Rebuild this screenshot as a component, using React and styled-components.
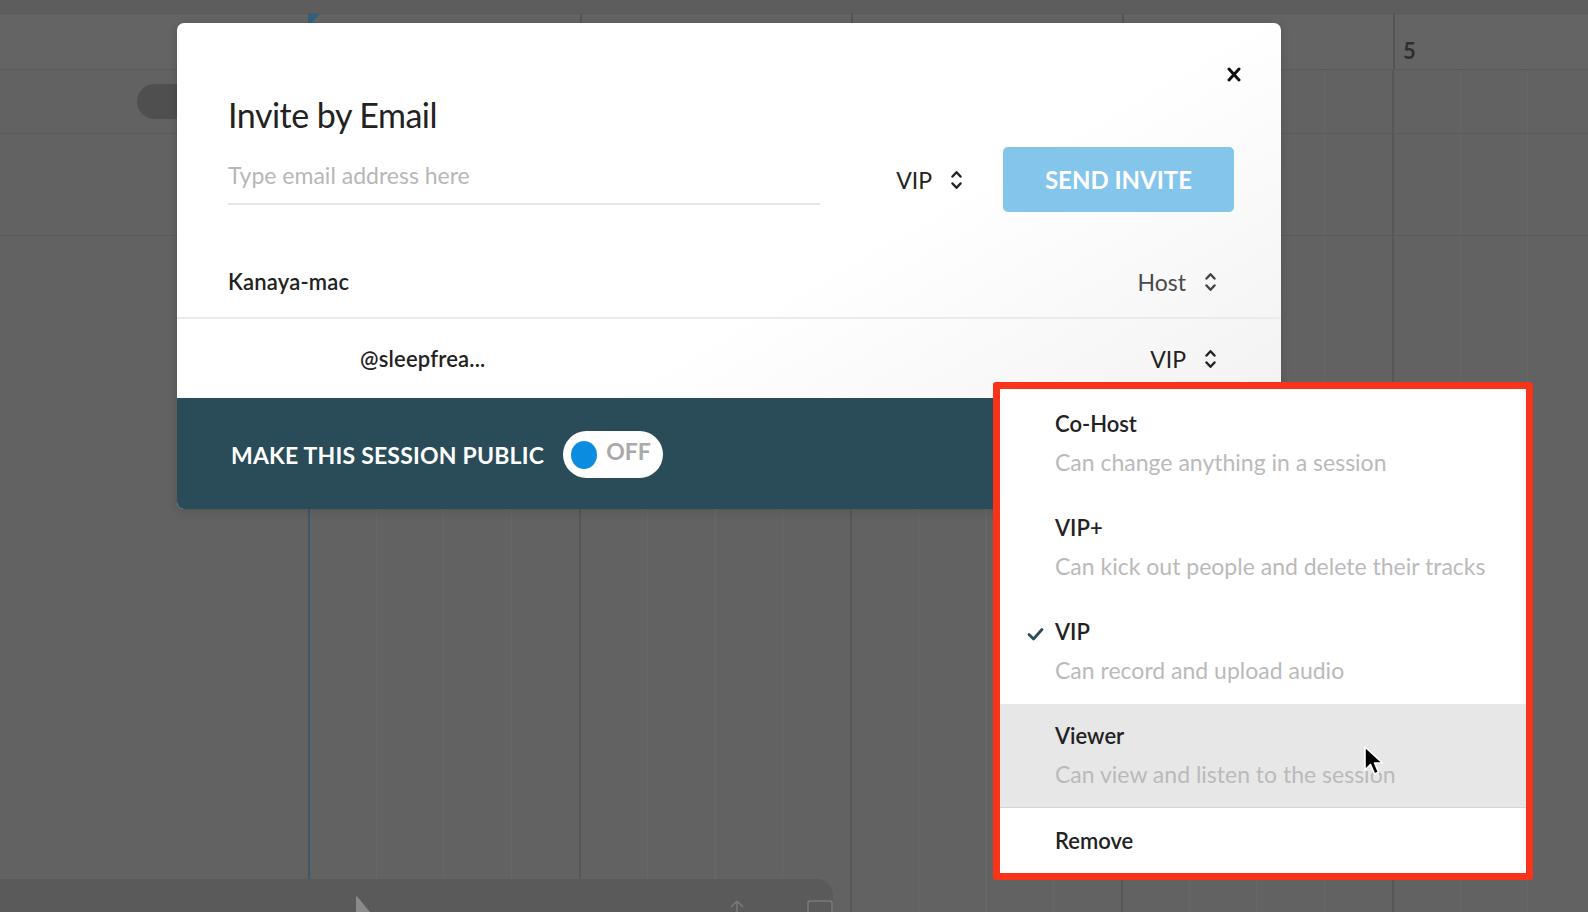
import React from "react";
import styled, { createGlobalStyle } from "styled-components";

const roles = [
  { name: "Co-Host", desc: "Can change anything in a session" },
  { name: "VIP+", desc: "Can kick out people and delete their tracks" },
  { name: "VIP", desc: "Can record and upload audio", checked: true },
  { name: "Viewer", desc: "Can view and listen to the session", hover: true },
];

const members = [
  { name: "Kanaya-mac", role: "Host", indent: false, muted: true },
  { name: "@sleepfrea...", role: "VIP", indent: true },
];

const bars = [1, 2, 3, 4, 5];

function Chevrons({ color = "#222" }) {
  return (
    <svg width="11" height="22" viewBox="0 0 11 22" fill="none">
      <path d="M1.5 7.5 L5.5 3.2 L9.5 7.5" stroke={color} strokeWidth="2.4" strokeLinecap="round" strokeLinejoin="round" />
      <path d="M1.5 14.5 L5.5 18.8 L9.5 14.5" stroke={color} strokeWidth="2.4" strokeLinecap="round" strokeLinejoin="round" />
    </svg>
  );
}

function App() {
  return (
    <Page>
      <GlobalStyle />
      <TopStrip />
      <Ruler>
        <RulerGutter>
          <Playhead />
        </RulerGutter>
        {bars.map((n) => (
          <BarCell key={n}>{n}</BarCell>
        ))}
        <BarCell />
      </Ruler>
      <Tracks>
        <TrackRow $h={64}>
          <TrackPill />
        </TrackRow>
        <TrackRow $h={102} />
        <Transport>
          <PlayIcon />
          <TransportIcon $left={350}>
            <svg width="16" height="12" viewBox="0 0 16 12" fill="none">
              <path d="M8 1 L14 7 M8 1 L2 7 M8 1 V12" stroke="#7a7a7a" strokeWidth="1.5" />
            </svg>
          </TransportIcon>
          <TransportIcon $left={62}>
            <svg width="26" height="12" viewBox="0 0 26 12" fill="none">
              <rect x="1" y="1" width="24" height="14" rx="2" stroke="#7a7a7a" strokeWidth="1.5" />
            </svg>
          </TransportIcon>
        </Transport>
      </Tracks>

      <Dialog>
        <CloseButton>
          <svg width="14" height="15" viewBox="0 0 14 15">
            <path d="M2 2 L12 13 M12 2 L2 13" stroke="#111" strokeWidth="3" strokeLinecap="round" />
          </svg>
        </CloseButton>
        <DialogTop>
          <Title>Invite by Email</Title>
          <InviteRow>
            <EmailInput placeholder="Type email address here" />
            <RolePicker>
              VIP <Chevrons />
            </RolePicker>
            <SendButton>SEND INVITE</SendButton>
          </InviteRow>
        </DialogTop>
        <MemberList>
          {members.map((m, i) => (
            <MemberRow key={m.name} $indent={m.indent} $first={i === 0}>
              <MemberName>{m.name}</MemberName>
              <RolePicker $muted={m.muted}>
                {m.role} <Chevrons color={m.muted ? "#444" : "#222"} />
              </RolePicker>
            </MemberRow>
          ))}
        </MemberList>
        <Footer>
          <FooterLabel>MAKE THIS SESSION PUBLIC</FooterLabel>
          <Toggle>
            <Knob />
            <ToggleText>OFF</ToggleText>
          </Toggle>
        </Footer>
      </Dialog>

      <Highlight>
        <Menu>
          {roles.map((r) => (
            <MenuItem key={r.name} $hover={r.hover}>
              <CheckSlot>
                {r.checked && (
                  <svg width="17" height="14" viewBox="0 0 17 14" fill="none">
                    <path d="M2 7.5 L6.5 12 L15 2.5" stroke="#2b4d58" strokeWidth="2.8" strokeLinecap="round" strokeLinejoin="round" />
                  </svg>
                )}
              </CheckSlot>
              <ItemText>
                <ItemName>{r.name}</ItemName>
                <ItemDesc>{r.desc}</ItemDesc>
              </ItemText>
            </MenuItem>
          ))}
          <RemoveItem>
            <CheckSlot />
            <ItemName>Remove</ItemName>
          </RemoveItem>
        </Menu>
      </Highlight>

      <Cursor>
        <svg width="22" height="32" viewBox="0 0 22 32">
          <path
            d="M2 2 L2 25 L7.5 19.5 L11.5 29 L15.5 27.3 L11.6 18 L19.5 18 Z"
            fill="#000"
            stroke="#fff"
            strokeWidth="1.6"
            strokeLinejoin="round"
          />
        </svg>
      </Cursor>
    </Page>
  );
}

export default App;

const GlobalStyle = createGlobalStyle`
  * { box-sizing: border-box; }
  body {
    margin: 0;
    background: #626262;
    font-family: Lato, "Noto Sans", sans-serif;
  }
  input::placeholder { color: #b7b7b7; }
`;

const Page = styled.div`
  position: relative;
  width: 1588px;
  height: 912px;
  overflow: hidden;
  background: #626262;
  display: grid;
  grid-template-rows: 14px 56px 1fr;
`;
const TopStrip = styled.div`
  background: #5d5d5d;
  border-bottom: 1px solid #585858;
`;
const Ruler = styled.div`
  display: flex;
  background: #646464;
  border-bottom: 1px solid #5a5a5a;
`;
const RulerGutter = styled.div`
  width: 309px;
  flex-shrink: 0;
  display: flex;
  justify-content: flex-end;
`;
const Playhead = styled.div`
  width: 12px;
  height: 12px;
  margin-right: -11px;
  background: #2f607e;
  clip-path: polygon(0 0, 100% 0, 0 100%);
`;
const BarCell = styled.div`
  width: 271px;
  flex-shrink: 0;
  border-left: 2px solid #555;
  padding: 26px 0 0 8px;
  font-size: 22px;
  font-weight: 700;
  color: #2e2e2e;
  line-height: 1;
`;
const Tracks = styled.div`
  display: flex;
  flex-direction: column;
  background-color: #626262;
  background-image: linear-gradient(to right, #3e5868 0 2px, transparent 2px),
    repeating-linear-gradient(to right, #575757 0 2px, transparent 2px 271px),
    repeating-linear-gradient(to right, #676767 0 1px, transparent 1px 67.75px);
  background-position: 308px 0;
  background-size: calc(100% - 308px) 100%;
  background-repeat: no-repeat;
`;
const TrackRow = styled.div`
  height: ${(p) => p.$h}px;
  flex-shrink: 0;
  border-bottom: 1px solid #5a5a5a;
  display: flex;
  align-items: center;
`;
const TrackPill = styled.div`
  margin-left: 137px;
  width: 90px;
  height: 35px;
  border-radius: 18px;
  background: #4f4f4f;
`;
const Transport = styled.div`
  margin-top: auto;
  width: 833px;
  height: 33px;
  background: #5a5a5a;
  border-top-right-radius: 16px;
  display: flex;
  align-items: flex-end;
  overflow: hidden;
`;
const PlayIcon = styled.div`
  margin-left: 356px;
  width: 32px;
  height: 17px;
  background: #8a8a8a;
  clip-path: polygon(0 0, 60% 100%, 0 100%);
  border-radius: 3px 0 0 0;
`;
const TransportIcon = styled.div`
  margin-left: ${(p) => p.$left}px;
  display: flex;
  align-items: flex-end;
  height: 14px;
`;

const Dialog = styled.div`
  position: absolute;
  left: 177px;
  top: 23px;
  width: 1104px;
  height: 486px;
  border-radius: 7px;
  overflow: hidden;
  display: flex;
  flex-direction: column;
  background: linear-gradient(150deg, #ffffff 55%, #efefef 100%);
  box-shadow: 0 2px 10px rgba(0, 0, 0, 0.15);
`;
const CloseButton = styled.div`
  position: absolute;
  top: 44px;
  right: 38px;
  width: 16px;
  height: 16px;
  display: flex;
`;
const DialogTop = styled.div`
  padding: 70px 47px 0 51px;
`;
const Title = styled.h1`
  margin: 0;
  font-size: 34px;
  font-weight: 400;
  line-height: 44px;
  color: #222;
  letter-spacing: -0.5px;
`;
const InviteRow = styled.div`
  margin-top: 10px;
  height: 65px;
  display: flex;
  align-items: center;
`;
const EmailInput = styled.input`
  align-self: flex-start;
  width: 592px;
  height: 58px;
  border: none;
  border-bottom: 2px solid #e6e6e6;
  background: transparent;
  outline: none;
  padding: 0;
  font-family: inherit;
  font-size: 23px;
  color: #222;
`;
const RolePicker = styled.div`
  display: flex;
  align-items: center;
  gap: 19px;
  font-size: 23px;
  color: ${(p) => (p.$muted ? "#4a4a4a" : "#222")};
  margin-left: ${(p) => (p.$muted === undefined ? "auto" : "0")};
`;
const SendButton = styled.div`
  margin-left: 41px;
  width: 231px;
  height: 65px;
  border-radius: 5px;
  background: #84c5eb;
  color: #fff;
  font-size: 24px;
  font-weight: 700;
  letter-spacing: 0;
  display: flex;
  align-items: center;
  justify-content: center;
`;
const MemberList = styled.div`
  margin-top: 28px;
  flex: 1;
`;
const MemberRow = styled.div`
  height: 79px;
  display: flex;
  align-items: center;
  justify-content: space-between;
  padding: ${(p) => (p.$first ? "6px" : "0")} 65px 0 ${(p) => (p.$indent ? "183px" : "51px")};
  border-bottom: ${(p) => (p.$first ? "2px solid #ebebeb" : "none")};
`;
const MemberName = styled.div`
  font-size: 22px;
  font-weight: 600;
  color: #222;
  letter-spacing: 0.2px;
`;
const Footer = styled.div`
  height: 113px;
  flex-shrink: 0;
  background: #2a4c58;
  display: flex;
  align-items: center;
  gap: 19px;
  padding: 0 0 0 54px;
`;
const FooterLabel = styled.div`
  color: #fff;
  font-size: 23px;
  font-weight: 700;
  letter-spacing: 0.2px;
`;
const Toggle = styled.div`
  width: 100px;
  height: 47px;
  border-radius: 24px;
  background: #fff;
  display: flex;
  align-items: center;
  padding-left: 8px;
  gap: 9px;
`;
const Knob = styled.div`
  width: 26px;
  height: 28px;
  border-radius: 50%;
  background: #0b8ce0;
`;
const ToggleText = styled.div`
  font-size: 23px;
  font-weight: 700;
  color: #a9a9a9;
  margin-top: -8px;
`;

const Highlight = styled.div`
  position: absolute;
  left: 993px;
  top: 382px;
  width: 540px;
  height: 498px;
  border: 7px solid #f7341a;
  border-radius: 3px;
  background: #fff;
`;
const Menu = styled.div`
  padding-top: 3px;
  display: flex;
  flex-direction: column;
`;
const MenuItem = styled.div`
  height: 104px;
  display: flex;
  padding: 18px 0 0 27px;
  background: ${(p) => (p.$hover ? "#e7e7e7" : "transparent")};
  border-bottom: ${(p) => (p.$hover ? "1px solid #d4d4d4" : "none")};
`;
const CheckSlot = styled.div`
  width: 28px;
  flex-shrink: 0;
  padding-top: 7px;
`;
const ItemText = styled.div`
  display: flex;
  flex-direction: column;
  gap: 10px;
`;
const ItemName = styled.div`
  font-size: 22px;
  line-height: 28px;
  font-weight: 600;
  color: #222;
`;
const ItemDesc = styled.div`
  font-size: 23px;
  line-height: 28px;
  color: #bababa;
`;
const RemoveItem = styled.div`
  height: 66px;
  display: flex;
  align-items: center;
  padding-left: 27px;
`;
const Cursor = styled.div`
  position: absolute;
  left: 1363px;
  top: 745px;
  display: flex;
`;
